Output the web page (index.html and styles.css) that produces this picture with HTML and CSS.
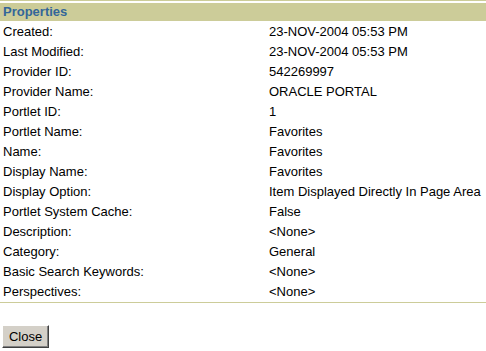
FILE: index.html
```html
<!DOCTYPE html>
<html>
<head>
<meta charset="utf-8">
<link rel="stylesheet" href="styles.css">
</head>
<body>
<div class="page">
  <div class="topline"></div>
  <div class="header">Properties</div>
  <table class="props">
    <tr><td class="lbl">Created:</td><td>23-NOV-2004 05:53 PM</td></tr>
    <tr><td class="lbl">Last Modified:</td><td>23-NOV-2004 05:53 PM</td></tr>
    <tr><td class="lbl">Provider ID:</td><td>542269997</td></tr>
    <tr><td class="lbl">Provider Name:</td><td>ORACLE PORTAL</td></tr>
    <tr><td class="lbl">Portlet ID:</td><td>1</td></tr>
    <tr><td class="lbl">Portlet Name:</td><td>Favorites</td></tr>
    <tr><td class="lbl">Name:</td><td>Favorites</td></tr>
    <tr><td class="lbl">Display Name:</td><td>Favorites</td></tr>
    <tr><td class="lbl">Display Option:</td><td>Item Displayed Directly In Page Area</td></tr>
    <tr><td class="lbl">Portlet System Cache:</td><td>False</td></tr>
    <tr><td class="lbl">Description:</td><td>&lt;None&gt;</td></tr>
    <tr><td class="lbl">Category:</td><td>General</td></tr>
    <tr><td class="lbl">Basic Search Keywords:</td><td>&lt;None&gt;</td></tr>
    <tr><td class="lbl">Perspectives:</td><td>&lt;None&gt;</td></tr>
  </table>
  <div class="sep"></div>
  <div class="actions"><button class="btn">Close</button></div>
</div>
</body>
</html>
```
FILE: styles.css
```css
html, body {
  margin: 0;
  padding: 0;
  background: #ffffff;
}
.page {
  font-family: "Liberation Sans", Arial, sans-serif;
  font-size: 13px;
  color: #000000;
}
.topline {
  height: 1px;
  background: #cccc99;
  margin-bottom: 2px;
}
.header {
  height: 18px;
  line-height: 18px;
  background: #cccc99;
  color: #336699;
  font-weight: bold;
  font-size: 13px;
  padding-left: 3px;
}
.props {
  width: 100%;
  border-collapse: collapse;
  border-spacing: 0;
  font-size: 13px;
}
.props td {
  height: 20px;
  padding: 0;
  vertical-align: middle;
  white-space: nowrap;
}
.props td.lbl {
  width: 266px;
  padding-left: 3px;
}
.sep {
  height: 1px;
  background: #cccc99;
  margin-top: 1px;
}
.actions {
  padding: 22px 0 0 2px;
}
.btn {
  font-family: "Liberation Sans", Arial, sans-serif;
  font-size: 13px;
  background: #d4d0c8;
  color: #000;
  width: 47px;
  height: 23px;
  padding: 0;
  border: 1px solid;
  border-color: #ffffff #404040 #404040 #ffffff;
  box-shadow: inset -1px -1px 0 #808080;
}
```
